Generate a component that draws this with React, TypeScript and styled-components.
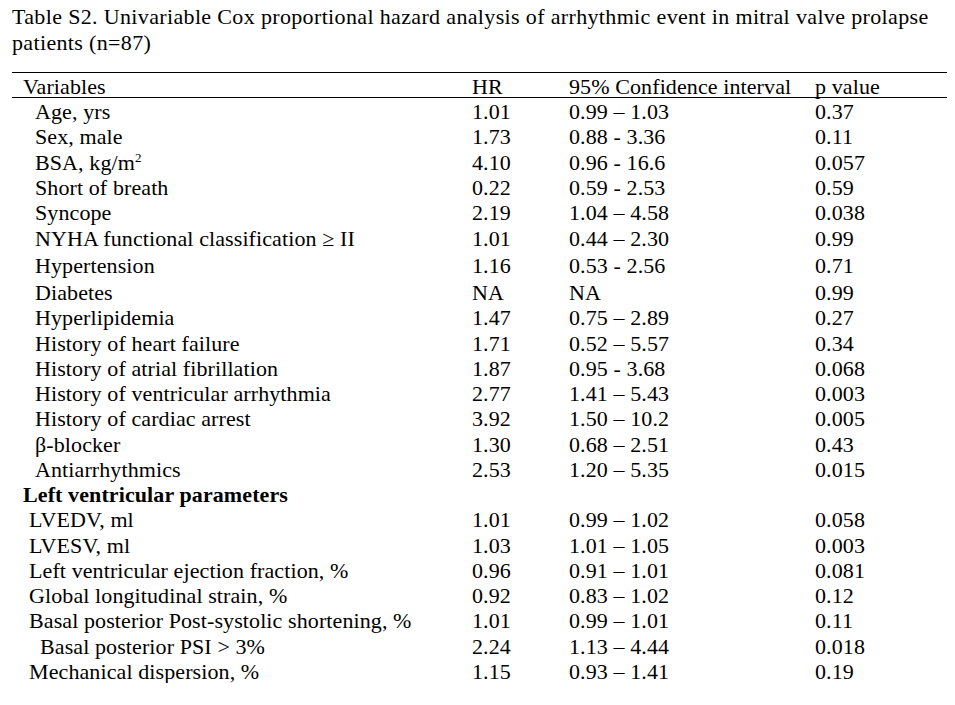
import styled, { createGlobalStyle } from "styled-components";

const GlobalStyle = createGlobalStyle`
  body {
    margin: 0;
    background: #fff;
    color: #000;
    font-family: "Liberation Serif", "Times New Roman", serif;
  }
`;

const Page = styled.div`
  padding: 4px 8px 0 12px;
  width: 955px;
  box-sizing: border-box;
`;

const Caption = styled.p`
  margin: 0;
  font-size: 22px;
  line-height: 26px;
  letter-spacing: 0.35px;
  width: 935px;
`;

const Table = styled.table`
  margin-top: 16px;
  border-collapse: collapse;
  table-layout: fixed;
  width: 935px;
  font-size: 22px;
  letter-spacing: 0.1px;
  border-top: 1px solid #000;
`;

const HeadRow = styled.tr`
  height: 25px;
  border-bottom: 1px solid #000;
`;

const Row = styled.tr<{ $h?: number }>`
  height: ${(p) => p.$h ?? 25.25}px;
`;

const Cell = styled.td<{ $indent?: number; $bold?: boolean }>`
  padding: 4px 0 0 ${(p) => p.$indent ?? 0}px;
  line-height: 20px;
  vertical-align: middle;
  white-space: nowrap;
  font-weight: ${(p) => (p.$bold ? 700 : 400)};
`;

const SupText = styled.sup`
  font-size: 13px;
  line-height: 0;
  vertical-align: 8px;
`;

type Item = {
  name: React.ReactNode;
  hr?: string;
  ci?: string;
  p?: string;
  indent: number;
  bold?: boolean;
  h?: number;
};

const rows: Item[] = [
  { name: "Age, yrs", hr: "1.01", ci: "0.99 – 1.03", p: "0.37", indent: 23 },
  { name: "Sex, male", hr: "1.73", ci: "0.88 - 3.36", p: "0.11", indent: 23 },
  {
    name: (
      <>
        BSA, kg/m<SupText>2</SupText>
      </>
    ),
    hr: "4.10",
    ci: "0.96 - 16.6",
    p: "0.057",
    indent: 23,
  },
  { name: "Short of breath", hr: "0.22", ci: "0.59 - 2.53", p: "0.59", indent: 23 },
  { name: "Syncope", hr: "2.19", ci: "1.04 – 4.58", p: "0.038", indent: 23 },
  { name: "NYHA functional classification ≥ II", hr: "1.01", ci: "0.44 – 2.30", p: "0.99", indent: 23, h: 27 },
  { name: "Hypertension", hr: "1.16", ci: "0.53 - 2.56", p: "0.71", indent: 23, h: 27 },
  { name: "Diabetes", hr: "NA", ci: "NA", p: "0.99", indent: 23, h: 26 },
  { name: "Hyperlipidemia", hr: "1.47", ci: "0.75 – 2.89", p: "0.27", indent: 23 },
  { name: "History of heart failure", hr: "1.71", ci: "0.52 – 5.57", p: "0.34", indent: 23 },
  { name: "History of atrial fibrillation", hr: "1.87", ci: "0.95 - 3.68", p: "0.068", indent: 23 },
  { name: "History of ventricular arrhythmia", hr: "2.77", ci: "1.41 – 5.43", p: "0.003", indent: 23 },
  { name: "History of cardiac arrest", hr: "3.92", ci: "1.50 – 10.2", p: "0.005", indent: 23 },
  { name: "β-blocker", hr: "1.30", ci: "0.68 – 2.51", p: "0.43", indent: 23 },
  { name: "Antiarrhythmics", hr: "2.53", ci: "1.20 – 5.35", p: "0.015", indent: 23 },
  { name: "Left ventricular parameters", indent: 11, bold: true },
  { name: "LVEDV, ml", hr: "1.01", ci: "0.99 – 1.02", p: "0.058", indent: 17 },
  { name: "LVESV, ml", hr: "1.03", ci: "1.01 – 1.05", p: "0.003", indent: 17 },
  { name: "Left ventricular ejection fraction, %", hr: "0.96", ci: "0.91 – 1.01", p: "0.081", indent: 17 },
  { name: "Global longitudinal strain, %", hr: "0.92", ci: "0.83 – 1.02", p: "0.12", indent: 17 },
  { name: "Basal posterior Post-systolic shortening, %", hr: "1.01", ci: "0.99 – 1.01", p: "0.11", indent: 17 },
  { name: "Basal posterior PSI > 3%", hr: "2.24", ci: "1.13 – 4.44", p: "0.018", indent: 28 },
  { name: "Mechanical dispersion, %", hr: "1.15", ci: "0.93 – 1.41", p: "0.19", indent: 17 },
];

export default function App() {
  return (
    <Page>
      <GlobalStyle />
      <Caption>
        Table S2. Univariable Cox proportional hazard analysis of arrhythmic event in mitral valve prolapse
        patients (n=87)
      </Caption>
      <Table>
        <colgroup>
          <col style={{ width: 460 }} />
          <col style={{ width: 97 }} />
          <col style={{ width: 246 }} />
          <col style={{ width: 132 }} />
        </colgroup>
        <thead>
          <HeadRow>
            <Cell $indent={11}>Variables</Cell>
            <Cell>HR</Cell>
            <Cell>95% Confidence interval</Cell>
            <Cell>p value</Cell>
          </HeadRow>
        </thead>
        <tbody>
          {rows.map((r, i) => (
            <Row key={i} $h={r.h}>
              <Cell $indent={r.indent} $bold={r.bold}>
                {r.name}
              </Cell>
              <Cell>{r.hr}</Cell>
              <Cell>{r.ci}</Cell>
              <Cell>{r.p}</Cell>
            </Row>
          ))}
        </tbody>
      </Table>
    </Page>
  );
}
